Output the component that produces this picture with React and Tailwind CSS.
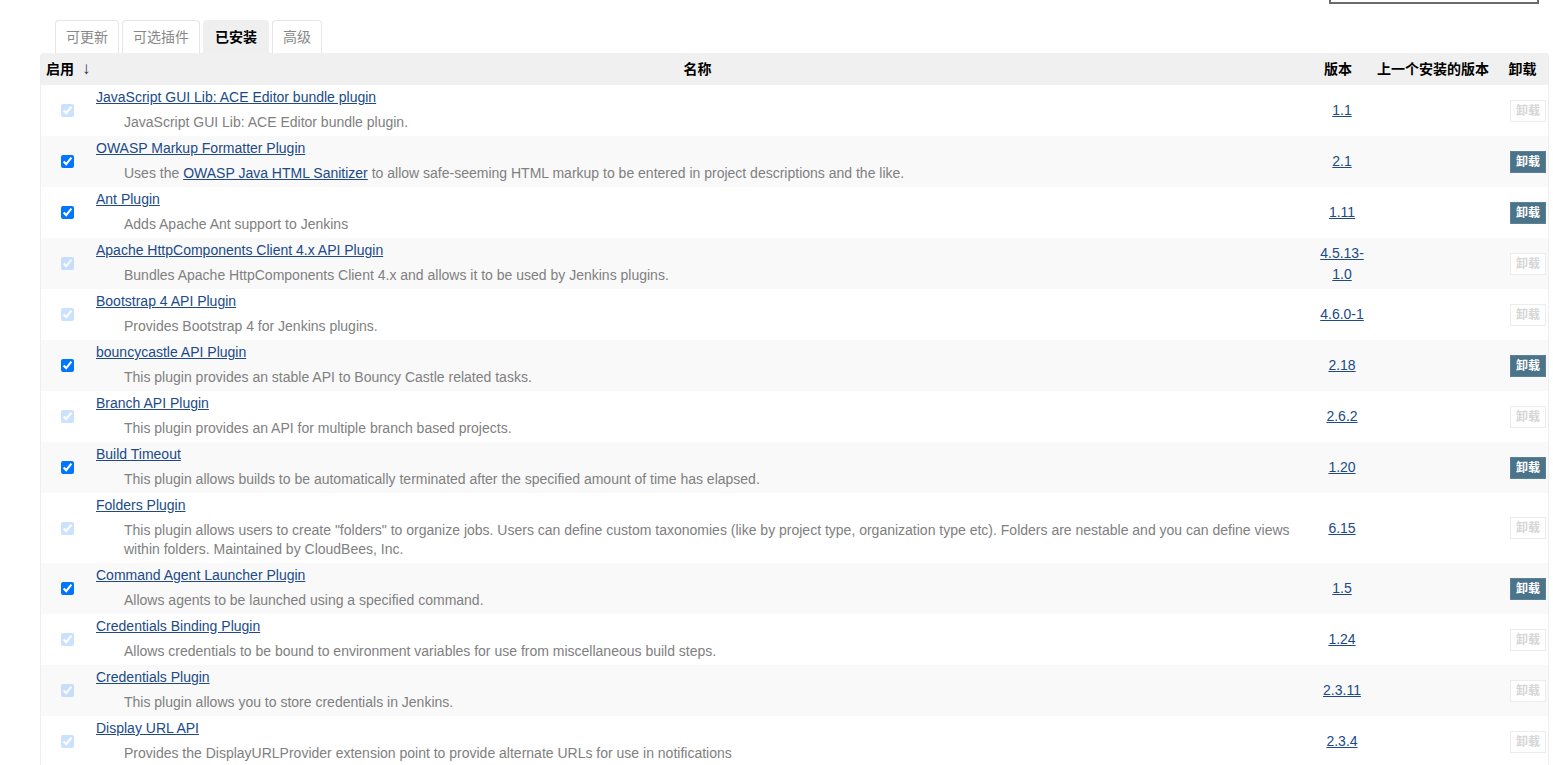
import React from 'react'

const plugins = [
  { name: 'JavaScript GUI Lib: ACE Editor bundle plugin', desc: 'JavaScript GUI Lib: ACE Editor bundle plugin.', version: '1.1', active: false },
  {
    name: 'OWASP Markup Formatter Plugin',
    desc: (
      <>
        Uses the <a href="#" className="text-[#204a87] underline">OWASP Java HTML Sanitizer</a> to allow safe-seeming HTML markup to be entered in project descriptions and the like.
      </>
    ),
    version: '2.1',
    active: true,
  },
  { name: 'Ant Plugin', desc: 'Adds Apache Ant support to Jenkins', version: '1.11', active: true },
  { name: 'Apache HttpComponents Client 4.x API Plugin', desc: 'Bundles Apache HttpComponents Client 4.x and allows it to be used by Jenkins plugins.', version: ['4.5.13-', '1.0'], active: false },
  { name: 'Bootstrap 4 API Plugin', desc: 'Provides Bootstrap 4 for Jenkins plugins.', version: '4.6.0-1', active: false },
  { name: 'bouncycastle API Plugin', desc: 'This plugin provides an stable API to Bouncy Castle related tasks.', version: '2.18', active: true },
  { name: 'Branch API Plugin', desc: 'This plugin provides an API for multiple branch based projects.', version: '2.6.2', active: false },
  { name: 'Build Timeout', desc: 'This plugin allows builds to be automatically terminated after the specified amount of time has elapsed.', version: '1.20', active: true },
  { name: 'Folders Plugin', desc: 'This plugin allows users to create "folders" to organize jobs. Users can define custom taxonomies (like by project type, organization type etc). Folders are nestable and you can define views within folders. Maintained by CloudBees, Inc.', version: '6.15', active: false },
  { name: 'Command Agent Launcher Plugin', desc: 'Allows agents to be launched using a specified command.', version: '1.5', active: true },
  { name: 'Credentials Binding Plugin', desc: 'Allows credentials to be bound to environment variables for use from miscellaneous build steps.', version: '1.24', active: false },
  { name: 'Credentials Plugin', desc: 'This plugin allows you to store credentials in Jenkins.', version: '2.3.11', active: false },
  { name: 'Display URL API', desc: 'Provides the DisplayURLProvider extension point to provide alternate URLs for use in notifications', version: '2.3.4', active: false },
]

const tabs = [
  { label: '可更新' },
  { label: '可选插件' },
  { label: '已安装', current: true },
  { label: '高级' },
]

function Version({ value }) {
  if (Array.isArray(value)) {
    return (
      <a href="#" className="text-[#204a87] underline leading-[19px]">
        {value[0]}
        <br />
        {value[1]}
      </a>
    )
  }
  return <a href="#" className="text-[#204a87] underline">{value}</a>
}

export default function App() {
  return (
    <div
      className="h-[765px] overflow-hidden bg-white text-[14px] text-[#333]"
      style={{ fontFamily: '"Liberation Sans", Arial, "Noto Sans CJK SC", sans-serif' }}
    >
      {/* search box, cut off at the top */}
      <div className="ml-[1329px] h-[4px] w-[210px] border-2 border-t-0 border-[#6b6b6b]" />

      {/* tabs */}
      <div className="mt-[16px] ml-[55px] flex gap-[3px]">
        {tabs.map((t) => (
          <div
            key={t.label}
            className={
              t.current
                ? 'h-[33px] px-[11px] flex items-center rounded-t-[4px] border border-b-0 border-[#efefef] bg-[#efefef] font-bold text-black'
                : 'h-[33px] px-[10px] flex items-center rounded-t-[4px] border border-b-0 border-[#e6e6e6] bg-white text-[#888]'
            }
          >
            {t.label}
          </div>
        ))}
      </div>

      {/* plugin table */}
      <div className="ml-[40px] w-[1509px] border-l border-r border-[#eeeeee] rounded-t-[4px]">
        <table className="w-full table-fixed border-collapse">
          <colgroup>
            <col className="w-[50px]" />
            <col />
            <col className="w-[68px]" />
            <col className="w-[122px]" />
            <col className="w-[54px]" />
          </colgroup>
          <thead>
            <tr className="h-[32px] bg-[#f0f0f0] text-black font-bold">
              <th className="pl-[5px] text-left font-bold whitespace-nowrap">
                启用<span className="ml-[8px] text-[17px] font-normal text-[#3a2a4a]">↓</span>
              </th>
              <th className="text-center font-bold">名称</th>
              <th className="text-center font-bold pl-[2px] pr-[2px]">版本</th>
              <th className="text-center font-bold">上一个安装的版本</th>
              <th className="text-center font-bold pl-[3px]">卸载</th>
            </tr>
          </thead>
          <tbody>
            {plugins.map((p, i) => (
              <tr key={p.name} className={i % 2 === 1 ? 'bg-[#f9f9f9]' : 'bg-white'}>
                <td className="pl-[20px] align-middle">
                  <input
                    type="checkbox"
                    checked
                    readOnly
                    tabIndex={p.active ? 0 : -1}
                    className={
                      p.active
                        ? 'block w-[13px] h-[13px] m-0'
                        : 'block w-[13px] h-[13px] m-0 opacity-[0.2] pointer-events-none'
                    }
                  />
                </td>
                <td className="pl-[5px] pr-[12px] pt-[2px] pb-[4px] align-top">
                  <div className="leading-[20px]">
                    <a href="#" className="text-[#204a87] underline">{p.name}</a>
                  </div>
                  <div className="mt-[6px] pl-[28px] leading-[19px] text-[#808080]">{p.desc}</div>
                </td>
                <td className="text-center align-middle pl-[8px]">
                  <Version value={p.version} />
                </td>
                <td />
                <td className="align-middle pr-[2px]">
                  <div className="flex justify-end">
                    {p.active ? (
                      <button className="w-[36px] h-[22px] bg-[#4b7389] border border-[#5b8296] text-white text-[12px] font-bold leading-none">
                        卸载
                      </button>
                    ) : (
                      <button className="w-[36px] h-[22px] bg-white border border-[#ececec] text-[#d6d6d6] text-[12px] font-bold leading-none">
                        卸载
                      </button>
                    )}
                  </div>
                </td>
              </tr>
            ))}
          </tbody>
        </table>
      </div>
    </div>
  )
}
